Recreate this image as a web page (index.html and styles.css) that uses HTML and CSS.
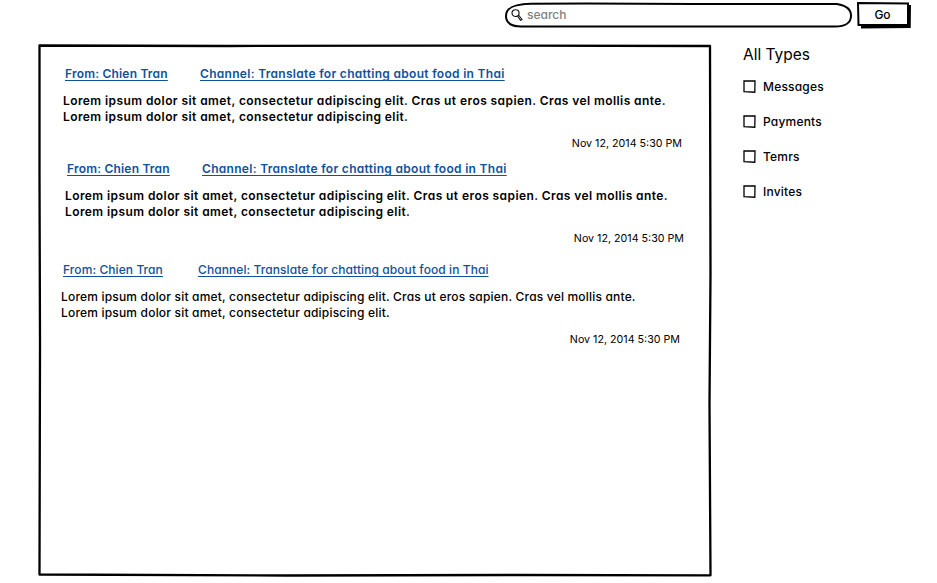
FILE: index.html
```html
<!DOCTYPE html>
<html lang="en">
<head>
<meta charset="utf-8">
<title>Messages</title>
<link rel="stylesheet" href="styles.css">
</head>
<body>
<header class="topbar">
  <div class="search">
    <svg class="outline" width="350" height="28" viewBox="0 0 350 28" fill="none" stroke="#000" stroke-width="2"><path d="M27 2.700L82 2.500L190 3L333 3C342 4.500 347.300 8 347 15C347 21 342 25.600 331 25.600L25 25.500C12 26 2 25 2 15C2 7 9 3 27 2.700Z"/></svg>
    <svg class="lens" width="12" height="13" viewBox="0 0 12 13" fill="none" stroke="#111"><path d="M5 .8C2.500.5 1 2 1 4C1 6.300 2.700 7.700 5 7.500C7 7.300 8.200 6 8 4C8 2 7 .8 5 .8Z" stroke-width="1.100"/><path d="M6.700 7.300L9.500 11.300L11 10.500L8 6.500" stroke-width="1.100"/></svg>
    <span class="hint">search</span>
  </div>
  <div class="go">
    <svg class="outline" width="54" height="28" viewBox="0 0 54 28"><path d="M4 24L50 23.500L51 4L54 4L53.700 27L4 27.500Z"/><path d="M1 2L51 2.500L51 24L1.500 24Z" fill="#fff" stroke="#000" stroke-width="2"/></svg>
    <span>Go</span>
  </div>
</header>
<div class="content">
  <main class="panel">
    <svg class="outline" width="674" height="534" viewBox="0 0 674 534" fill="none" stroke="#000" stroke-width="2.300" stroke-linejoin="round"><path d="M1.500 1.500L190 2L400 1.600L672 2L672.500 230L671.500 360L672.500 531.300L480 531L250 531.500L1.500 530.500L2 300L1.500 130Z"/></svg>
    <article class="message unread first">
      <div class="links"><a class="from">From: Chien Tran</a><a class="channel">Channel: Translate for chatting about food in Thai</a></div>
      <p>Lorem ipsum dolor sit amet, consectetur adipiscing elit. Cras ut eros sapien. Cras vel mollis ante.<br>Lorem ipsum dolor sit amet, consectetur adipiscing elit.</p>
      <time>Nov 12, 2014 5:30 PM</time>
    </article>
    <article class="message unread second">
      <div class="links"><a class="from">From: Chien Tran</a><a class="channel">Channel: Translate for chatting about food in Thai</a></div>
      <p>Lorem ipsum dolor sit amet, consectetur adipiscing elit. Cras ut eros sapien. Cras vel mollis ante.<br>Lorem ipsum dolor sit amet, consectetur adipiscing elit.</p>
      <time>Nov 12, 2014 5:30 PM</time>
    </article>
    <article class="message">
      <div class="links"><a class="from">From: Chien Tran</a><a class="channel">Channel: Translate for chatting about food in Thai</a></div>
      <p>Lorem ipsum dolor sit amet, consectetur adipiscing elit. Cras ut eros sapien. Cras vel mollis ante.<br>Lorem ipsum dolor sit amet, consectetur adipiscing elit.</p>
      <time>Nov 12, 2014 5:30 PM</time>
    </article>
  </main>
  <aside class="filters">
    <h2>All Types</h2>
    <div class="option"><svg width="13" height="13" viewBox="0 0 13 13"><path class="box" d="M1 1L12 .8L11.800 12.200L1 11.700Z"/></svg><span>Messages</span></div>
    <div class="option"><svg width="13" height="13" viewBox="0 0 13 13"><path class="box" d="M1 1L12 .8L11.800 12.200L1 11.700Z"/></svg><span>Payments</span></div>
    <div class="option"><svg width="13" height="13" viewBox="0 0 13 13"><path class="box" d="M1 1L12 .8L11.800 12.200L1 11.700Z"/></svg><span>Temrs</span></div>
    <div class="option"><svg width="13" height="13" viewBox="0 0 13 13"><path class="box" d="M1 1L12 .8L11.800 12.200L1 11.700Z"/></svg><span>Invites</span></div>
  </aside>
</div>
</body>
</html>
```
FILE: styles.css
```css
* { box-sizing: border-box; }
body {
  margin: 0;
  height: 583px;
  overflow: hidden;
  background: #fff;
  color: #000;
  font: 450 12px/16px Inter, "Liberation Sans", sans-serif;
  font-feature-settings: "cv11" 1;
}
.topbar {
  display: flex;
  justify-content: flex-end;
  gap: 3px;
  height: 44px;
  padding: 1px 26px 0 0;
}
.outline { position: absolute; left: 0; top: 0; }
.search {
  position: relative;
  display: flex;
  gap: 4px;
  width: 350px;
  height: 28px;
  padding: 6px 0 0 7px;
}
.lens { position: relative; margin-top: 2px; }
.hint { position: relative; color: #808080; font-weight: 500; }
.go {
  position: relative;
  width: 54px;
  height: 27px;
  padding: 6px 3px 0 0;
  text-align: center;
}
.go span { position: relative; }
.content { display: flex; gap: 31px; padding-left: 38px; }
.panel {
  position: relative;
  width: 674px;
  height: 534px;
  padding: 22px 0 0 23px;
}
.message { width: 619px; }
.first { margin-left: 2px; margin-bottom: 10px; }
.second { margin-left: 4px; margin-bottom: 16px; }
.links { display: flex; height: 16px; padding-left: 2px; color: #10519c; letter-spacing: .08px; }
.links a { text-decoration: underline; text-underline-offset: 2px; text-decoration-thickness: 1px; }
.from { width: 135px; }
.message p { margin: 11px 0 12px; white-space: nowrap; letter-spacing: .19px; }
.unread .links, .unread p { font-weight: 600; }
.unread .links { letter-spacing: .3px; }
.unread .from { letter-spacing: .2px; }
.unread p { letter-spacing: .42px; }
.message time { display: block; height: 14px; font-size: 10.7px; line-height: 14px; text-align: right; font-weight: 400; }
.filters { width: 160px; padding-top: 1px; }
.filters h2 { margin: 0 0 14px; font-size: 15.500px; line-height: 19px; font-weight: 400; }
.option { display: flex; align-items: center; gap: 7px; height: 16px; margin-bottom: 19px; letter-spacing: .2px; }
.option span { padding-top: 2px; }
.box { fill: none; stroke: #000; stroke-width: 1.300; }
```
